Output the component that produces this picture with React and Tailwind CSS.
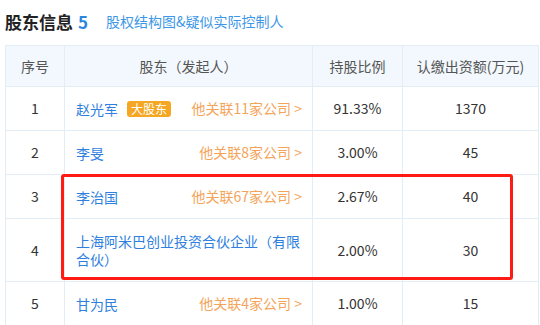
import React from "react";

const rows = [
  { n: 1, name: "赵光军", badge: true, rel: "他关联11家公司 >", pct: "91.33%", amt: "1370" },
  { n: 2, name: "李旻", rel: "他关联8家公司 >", pct: "3.00%", amt: "45" },
  { n: 3, name: "李治国", rel: "他关联67家公司 >", pct: "2.67%", amt: "40" },
  { n: 4, name: "上海阿米巴创业投资合伙企业（有限合伙）", rel: null, pct: "2.00%", amt: "30", tall: true },
  { n: 5, name: "甘为民", rel: "他关联4家公司 >", pct: "1.00%", amt: "15" },
];

export default function App() {
  return (
    <div
      className="relative w-[540px] h-[325px] bg-white overflow-hidden text-[#333]"
      style={{ fontFamily: '"Noto Sans CJK SC", "Noto Sans", sans-serif' }}
    >
      <div className="flex items-center h-[45px] pl-[5px] pb-[2px]">
        <span className="text-[17px] font-bold text-[#222]">股东信息</span>
        <span className="text-[17px] font-bold text-[#2b86e0] ml-[5px]">5</span>
        <span className="text-[14px] text-[#3d97e6] ml-[18px]">股权结构图&amp;疑似实际控制人</span>
      </div>
      <table className="ml-[5px] w-[533px] border-collapse table-fixed text-[14px]">
        <colgroup>
          <col className="w-[59px]" />
          <col className="w-[248px]" />
          <col className="w-[90px]" />
          <col className="w-[136px]" />
        </colgroup>
        <thead>
          <tr className="h-[41px] bg-[#f2f8fd] text-[#555]">
            <th className="border border-[#e3edf6] font-normal">序号</th>
            <th className="border border-[#e3edf6] font-normal">股东（发起人）</th>
            <th className="border border-[#e3edf6] font-normal">持股比例</th>
            <th className="border border-[#e3edf6] font-normal">认缴出资额(万元)</th>
          </tr>
        </thead>
        <tbody>
          {rows.map((r) => (
            <tr key={r.n} className={r.tall ? "h-[63px]" : "h-[44px]"}>
              <td className="border border-[#e3edf6] text-center">{r.n}</td>
              <td className="border border-[#e3edf6] pl-[11px] pr-[10px]">
                <div className="flex items-center">
                  <span className="text-[#2e7fde] leading-[18px]">{r.name}</span>
                  {r.badge && (
                    <span className="ml-[9px] px-[4px] h-[16px] leading-[16px] text-[12px] text-white bg-[#f5a623] rounded-[3px]">
                      大股东
                    </span>
                  )}
                  {r.rel && <span className="ml-auto text-[#f4a45a]">{r.rel}</span>}
                </div>
              </td>
              <td className="border border-[#e3edf6] text-center">{r.pct}</td>
              <td className="border border-[#e3edf6] text-center">{r.amt}</td>
            </tr>
          ))}
        </tbody>
      </table>
      <div className="absolute left-[61px] top-[174px] w-[452px] h-[106px] border-[3px] border-[#ff1a14] rounded-[3px]" />
    </div>
  );
}
